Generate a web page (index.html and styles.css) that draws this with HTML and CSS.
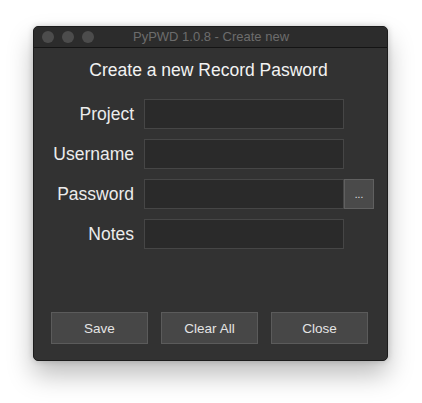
FILE: index.html
```html
<!DOCTYPE html>
<html>
<head>
<meta charset="utf-8">
<link rel="stylesheet" href="styles.css">
</head>
<body>
<div class="window">
  <div class="titlebar">
    <div class="lights"><span class="light"></span><span class="light"></span><span class="light"></span></div>
    <div class="wtitle">PyPWD 1.0.8 - Create new</div>
    <div></div>
  </div>
  <div class="content">
    <h1 class="heading">Create a new Record Pasword</h1>
    <div class="form">
      <label class="label">Project</label>
      <div class="field"></div>
      <div></div>
      <label class="label">Username</label>
      <div class="field"></div>
      <div></div>
      <label class="label">Password</label>
      <div class="field"></div>
      <div class="more">...</div>
      <label class="label">Notes</label>
      <div class="field"></div>
      <div></div>
    </div>
    <div class="actions">
      <div class="btn">Save</div>
      <div class="btn">Clear All</div>
      <div class="btn">Close</div>
    </div>
  </div>
</div>
</body>
</html>
```
FILE: styles.css
```css
html, body {
  margin: 0;
  padding: 0;
  background: #ffffff;
}
body {
  width: 422px;
  height: 403px;
  overflow: hidden;
  font-family: "Liberation Sans", Arial, sans-serif;
}
.window {
  margin: 26px 0 0 33px;
  width: 355px;
  height: 335px;
  box-sizing: border-box;
  background: #323232;
  border: 1px solid #1c1c1c;
  border-radius: 5px;
  box-shadow: 0 14px 26px rgba(0,0,0,0.26), 0 0 6px rgba(0,0,0,0.18);
  display: flex;
  flex-direction: column;
  overflow: hidden;
}
.titlebar {
  height: 20px;
  background: #2c2c2c;
  border-bottom: 1px solid #141414;
  display: grid;
  grid-template-columns: 1fr auto 1fr;
  align-items: center;
}
.lights {
  display: flex;
  gap: 8px;
  padding-left: 8px;
}
.light {
  width: 12px;
  height: 12px;
  border-radius: 50%;
  background: #4c4c4c;
}
.wtitle {
  font-size: 13px;
  color: #6c6c6c;
  line-height: 20px;
  padding-left: 1px;
}
.content {
  flex: 1;
  display: flex;
  flex-direction: column;
  padding-top: 12px;
}
.heading {
  margin: 0;
  font-size: 17.5px;
  line-height: 20px;
  font-weight: normal;
  color: #f2f2f2;
  text-align: center;
  padding-right: 4px;
}
.form {
  margin-top: 19px;
  display: grid;
  grid-template-columns: 110px 200px 30px;
  row-gap: 10px;
  grid-auto-rows: 30px;
}
.label {
  font-size: 17.5px;
  line-height: 30px;
  color: #ececec;
  text-align: right;
  padding-right: 10px;
}
.field {
  box-sizing: border-box;
  background: #2a2a2a;
  border: 1px solid #464646;
}
.more {
  box-sizing: border-box;
  background: #4a4a4a;
  border: 1px solid #606060;
  color: #e8e8e8;
  font-size: 10px;
  text-align: center;
  padding-top: 2px;
  line-height: 26px;
}
.actions {
  margin-top: auto;
  margin-bottom: 16px;
  display: flex;
  gap: 13px;
  padding-left: 17px;
}
.btn {
  box-sizing: border-box;
  width: 97px;
  height: 32px;
  background: #474747;
  border: 1px solid #5b5b5b;
  color: #e4e4e4;
  font-size: 13.5px;
  line-height: 31px;
  text-align: center;
}
```
